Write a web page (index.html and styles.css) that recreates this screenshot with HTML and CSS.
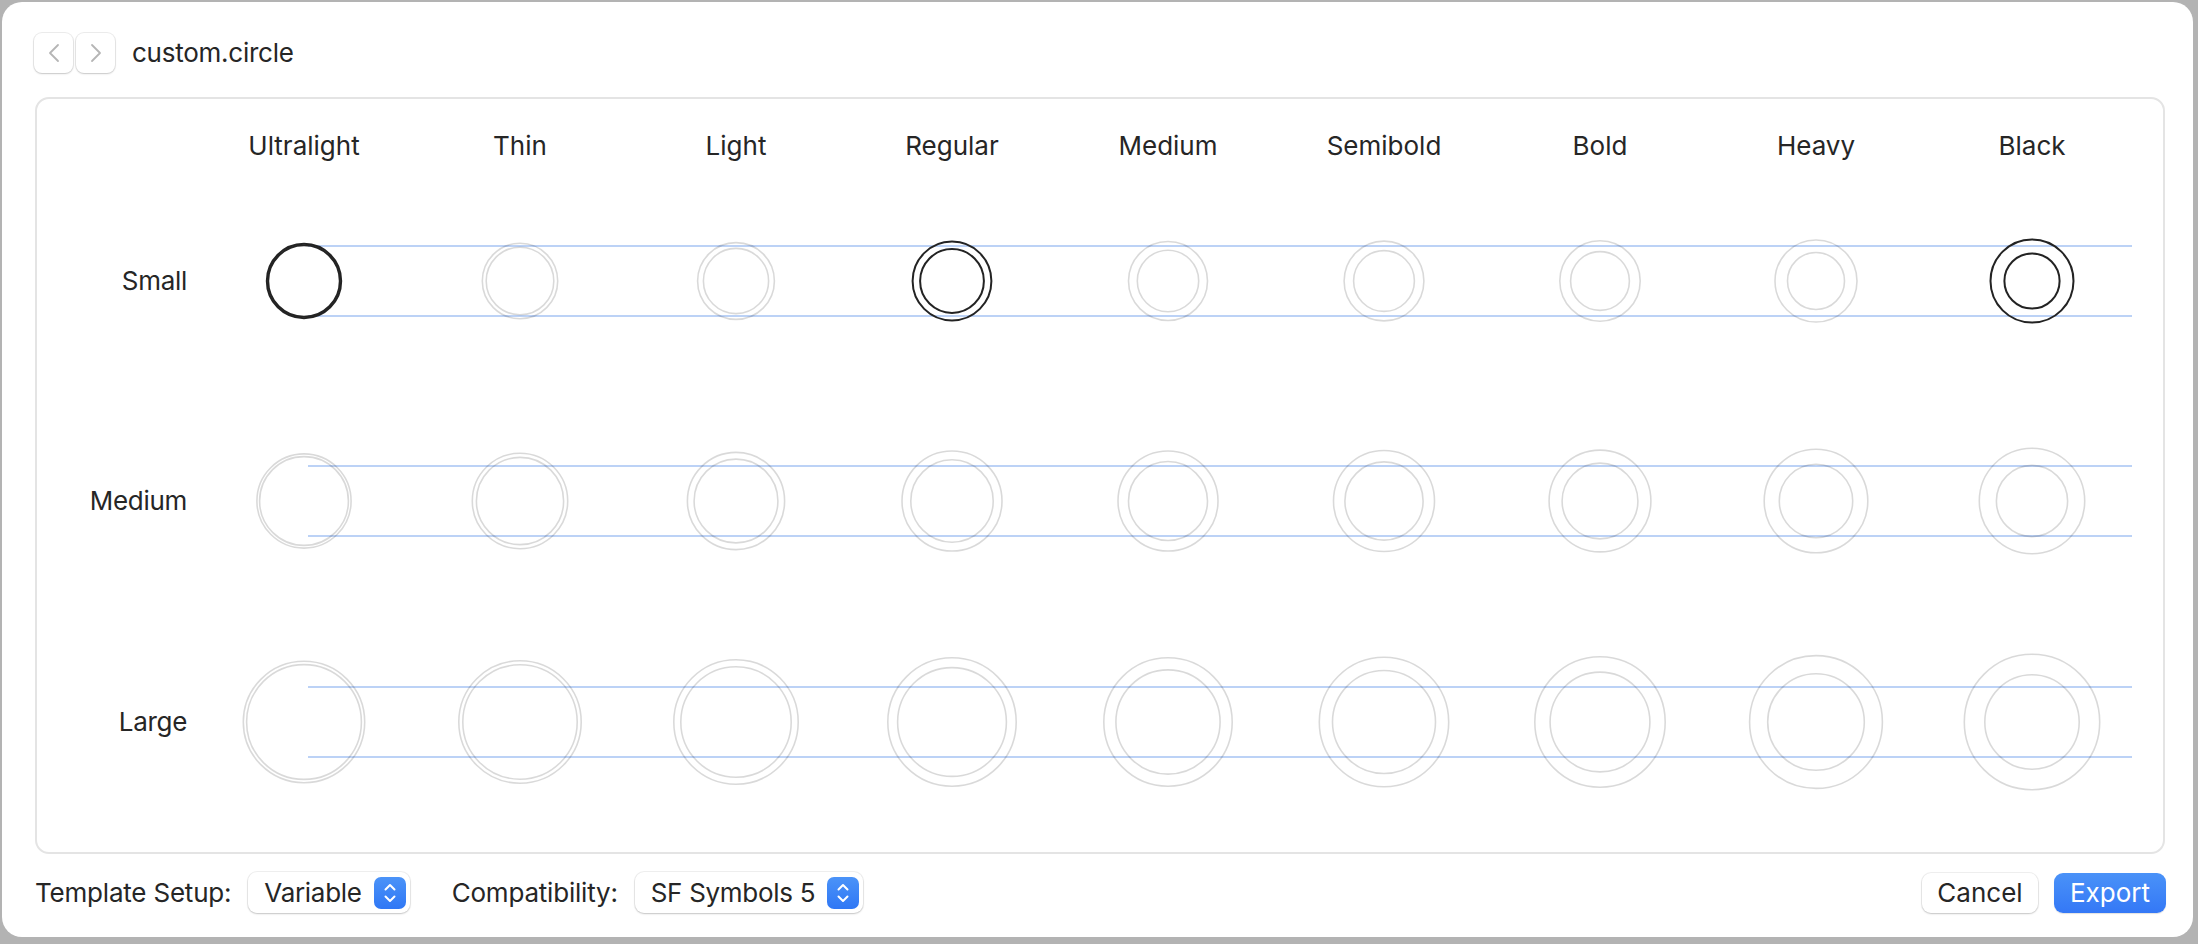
FILE: index.html
```html
<!DOCTYPE html>
<html>
<head>
<meta charset="utf-8">
<title>custom.circle</title>
<link rel="stylesheet" href="styles.css">
</head>
<body>
<div class="window">
  <div class="titlebar">
    <div class="navgroup">
      <button class="nav"><svg width="14" height="20" viewBox="0 0 14 20"><path d="M11 2 L3 10 L11 18" /></svg></button>
      <button class="nav"><svg width="14" height="20" viewBox="0 0 14 20"><path d="M3 2 L11 10 L3 18" /></svg></button>
    </div>
    <span class="title">custom.circle</span>
  </div>

  <div class="panel">
    <div class="row head">
      <div class="label"></div>
      <div class="track">
        <div class="cell">Ultralight</div>
        <div class="cell">Thin</div>
        <div class="cell">Light</div>
        <div class="cell">Regular</div>
        <div class="cell">Medium</div>
        <div class="cell">Semibold</div>
        <div class="cell">Bold</div>
        <div class="cell">Heavy</div>
        <div class="cell">Black</div>
      </div>
    </div>

    <div class="row scale s-small">
      <div class="label">Small</div>
      <div class="track lines">
        <div class="cell"><svg class="glyph on" viewBox="0 0 150 150"><circle cx="75" cy="75" r="37.2"/><circle cx="75" cy="75" r="35.8"/></svg></div>
        <div class="cell"><svg class="glyph" viewBox="0 0 150 150"><circle cx="75" cy="75" r="37.7"/><circle cx="75" cy="75" r="33.8"/></svg></div>
        <div class="cell"><svg class="glyph" viewBox="0 0 150 150"><circle cx="75" cy="75" r="38.4"/><circle cx="75" cy="75" r="32.6"/></svg></div>
        <div class="cell"><svg class="glyph on" viewBox="0 0 150 150"><circle cx="75" cy="75" r="39.4"/><circle cx="75" cy="75" r="31.9"/></svg></div>
        <div class="cell"><svg class="glyph" viewBox="0 0 150 150"><circle cx="75" cy="75" r="39.5"/><circle cx="75" cy="75" r="30.7"/></svg></div>
        <div class="cell"><svg class="glyph" viewBox="0 0 150 150"><circle cx="75" cy="75" r="39.9"/><circle cx="75" cy="75" r="30.4"/></svg></div>
        <div class="cell"><svg class="glyph" viewBox="0 0 150 150"><circle cx="75" cy="75" r="40.2"/><circle cx="75" cy="75" r="29.4"/></svg></div>
        <div class="cell"><svg class="glyph" viewBox="0 0 150 150"><circle cx="75" cy="75" r="41.0"/><circle cx="75" cy="75" r="28.5"/></svg></div>
        <div class="cell"><svg class="glyph on" viewBox="0 0 150 150"><circle cx="75" cy="75" r="41.5"/><circle cx="75" cy="75" r="27.6"/></svg></div>
      </div>
    </div>

    <div class="row scale s-medium">
      <div class="label">Medium</div>
      <div class="track lines">
        <div class="cell"><svg class="glyph" viewBox="0 0 150 150"><circle cx="75" cy="75" r="47.1"/><circle cx="75" cy="75" r="44.4"/></svg></div>
        <div class="cell"><svg class="glyph" viewBox="0 0 150 150"><circle cx="75" cy="75" r="47.7"/><circle cx="75" cy="75" r="43.6"/></svg></div>
        <div class="cell"><svg class="glyph" viewBox="0 0 150 150"><circle cx="75" cy="75" r="48.6"/><circle cx="75" cy="75" r="41.9"/></svg></div>
        <div class="cell"><svg class="glyph" viewBox="0 0 150 150"><circle cx="75" cy="75" r="50.0"/><circle cx="75" cy="75" r="41.2"/></svg></div>
        <div class="cell"><svg class="glyph" viewBox="0 0 150 150"><circle cx="75" cy="75" r="50.0"/><circle cx="75" cy="75" r="39.5"/></svg></div>
        <div class="cell"><svg class="glyph" viewBox="0 0 150 150"><circle cx="75" cy="75" r="50.5"/><circle cx="75" cy="75" r="39.1"/></svg></div>
        <div class="cell"><svg class="glyph" viewBox="0 0 150 150"><circle cx="75" cy="75" r="50.9"/><circle cx="75" cy="75" r="37.9"/></svg></div>
        <div class="cell"><svg class="glyph" viewBox="0 0 150 150"><circle cx="75" cy="75" r="51.8"/><circle cx="75" cy="75" r="36.7"/></svg></div>
        <div class="cell"><svg class="glyph" viewBox="0 0 150 150"><circle cx="75" cy="75" r="52.7"/><circle cx="75" cy="75" r="35.6"/></svg></div>
      </div>
    </div>

    <div class="row scale s-large">
      <div class="label">Large</div>
      <div class="track lines">
        <div class="cell"><svg class="glyph" viewBox="0 0 150 150"><circle cx="75" cy="75" r="60.7"/><circle cx="75" cy="75" r="57.4"/></svg></div>
        <div class="cell"><svg class="glyph" viewBox="0 0 150 150"><circle cx="75" cy="75" r="61.2"/><circle cx="75" cy="75" r="57.2"/></svg></div>
        <div class="cell"><svg class="glyph" viewBox="0 0 150 150"><circle cx="75" cy="75" r="62.2"/><circle cx="75" cy="75" r="55.2"/></svg></div>
        <div class="cell"><svg class="glyph" viewBox="0 0 150 150"><circle cx="75" cy="75" r="64.2"/><circle cx="75" cy="75" r="54.4"/></svg></div>
        <div class="cell"><svg class="glyph" viewBox="0 0 150 150"><circle cx="75" cy="75" r="64.2"/><circle cx="75" cy="75" r="52.1"/></svg></div>
        <div class="cell"><svg class="glyph" viewBox="0 0 150 150"><circle cx="75" cy="75" r="64.7"/><circle cx="75" cy="75" r="51.5"/></svg></div>
        <div class="cell"><svg class="glyph" viewBox="0 0 150 150"><circle cx="75" cy="75" r="65.2"/><circle cx="75" cy="75" r="49.9"/></svg></div>
        <div class="cell"><svg class="glyph" viewBox="0 0 150 150"><circle cx="75" cy="75" r="66.4"/><circle cx="75" cy="75" r="48.3"/></svg></div>
        <div class="cell"><svg class="glyph" viewBox="0 0 150 150"><circle cx="75" cy="75" r="67.7"/><circle cx="75" cy="75" r="47.2"/></svg></div>
      </div>
    </div>
  </div>

  <div class="footer">
    <div class="options">
      <span class="flabel">Template Setup:</span>
      <div class="popup">
        <span class="ptext">Variable</span>
        <span class="stepper"><svg width="32" height="32" viewBox="0 0 32 32"><path d="M11.5 12.5 L16 8 L20.5 12.5 M11.5 19.5 L16 24 L20.5 19.5"/></svg></span>
      </div>
      <span class="flabel second">Compatibility:</span>
      <div class="popup">
        <span class="ptext">SF Symbols 5</span>
        <span class="stepper"><svg width="32" height="32" viewBox="0 0 32 32"><path d="M11.5 12.5 L16 8 L20.5 12.5 M11.5 19.5 L16 24 L20.5 19.5"/></svg></span>
      </div>
    </div>
    <div class="actions">
      <button class="btn">Cancel</button>
      <button class="btn primary">Export</button>
    </div>
  </div>
</div>
</body>
</html>
```

FILE: styles.css
```css
html, body {
  margin: 0;
  padding: 0;
}

body {
  width: 2198px;
  height: 944px;
  background: #b3b3b3;
  padding: 2px 0 0 2px;
  box-sizing: border-box;
  font-family: Inter, "Liberation Sans", sans-serif;
  color: #262626;
  overflow: hidden;
}

.window {
  width: 2191px;
  height: 935px;
  background: #ffffff;
  border-radius: 20px;
  box-sizing: border-box;
  padding: 31px 28px 0 33px;
  display: flex;
  flex-direction: column;
}

/* title bar */
.titlebar {
  display: flex;
  align-items: center;
  height: 40px;
}

.navgroup {
  display: flex;
  gap: 3px;
  margin-left: -1px;
}

.nav {
  width: 39px;
  height: 40px;
  padding: 0;
  border: none;
  border-radius: 8px;
  background: #ffffff;
  box-shadow: 0 0 0 1px rgba(0, 0, 0, 0.07), 0 1px 2px rgba(0, 0, 0, 0.16);
  display: flex;
  align-items: center;
  justify-content: center;
}

.nav path {
  fill: none;
  stroke: #b5b5b5;
  stroke-width: 1.8;
  stroke-linecap: round;
  stroke-linejoin: round;
}

.title {
  margin-left: 17px;
  font-size: 26px;
  line-height: 32px;
  letter-spacing: -0.25px;
  color: #262626;
}

/* panel */
.panel {
  margin-top: 24px;
  height: 757px;
  box-sizing: border-box;
  border: 2px solid #e4e4e4;
  border-radius: 14px;
  display: flex;
  flex-direction: column;
}

.row {
  display: flex;
}

.row .label {
  width: 159px;
  flex: none;
  box-sizing: border-box;
  padding-right: 9px;
  text-align: right;
  font-size: 26px;
  line-height: 32px;
  letter-spacing: -0.3px;
  align-self: center;
}

.track {
  display: flex;
  width: 1944px;
}

.cell {
  width: 216px;
  flex: none;
  display: flex;
  align-items: center;
  justify-content: center;
}

.head {
  height: 72px;
}

.head .cell {
  font-size: 26px;
  line-height: 32px;
  padding-top: 31px;
  align-items: flex-start;
}

.s-small, .s-medium {
  height: 220px;
}

.s-large {
  height: 222px;
}

.lines {
  background-image:
    linear-gradient(#bcd2f6, #bcd2f6),
    linear-gradient(#bcd2f6, #bcd2f6);
  background-repeat: no-repeat;
  background-size: 1824px 2px, 1824px 2px;
  background-position: 112px calc(50% - 35px), 112px calc(50% + 35px);
}

.glyph {
  width: 150px;
  height: 150px;
  display: block;
}

.glyph circle {
  fill: none;
  stroke: rgba(0, 0, 0, 0.15);
  stroke-width: 1.6;
}

.glyph.on circle {
  stroke: #232323;
  stroke-width: 2;
}

/* footer */
.footer {
  margin-top: 18px;
  display: flex;
  justify-content: space-between;
  align-items: center;
  height: 41px;
}

.options {
  display: flex;
  align-items: center;
}

.flabel {
  font-size: 26px;
  line-height: 32px;
  letter-spacing: -0.2px;
  margin-right: 17px;
}

.flabel.second {
  margin-left: 42px;
}

.popup {
  height: 41px;
  box-sizing: border-box;
  display: flex;
  align-items: center;
  gap: 12px;
  padding: 0 4px 0 16px;
  background: #ffffff;
  border-radius: 9px;
  box-shadow: 0 0 0 1px rgba(0, 0, 0, 0.06), 0 1px 2px rgba(0, 0, 0, 0.18);
}

.ptext {
  font-size: 26px;
  line-height: 32px;
  letter-spacing: -0.3px;
}

.stepper {
  width: 32px;
  height: 32px;
  border-radius: 7px;
  background: linear-gradient(#4b93f8, #2f77f5);
  display: flex;
}

.stepper path {
  fill: none;
  stroke: #ffffff;
  stroke-width: 2;
  stroke-linecap: round;
  stroke-linejoin: round;
}

.actions {
  display: flex;
  gap: 16px;
  margin-right: -1px;
}

.btn {
  height: 40px;
  border: none;
  border-radius: 9px;
  font-family: Inter, "Liberation Sans", sans-serif;
  font-size: 26px;
  line-height: 32px;
  color: #262626;
  background: #ffffff;
  box-shadow: 0 0 0 1px rgba(0, 0, 0, 0.06), 0 1px 2px rgba(0, 0, 0, 0.18);
  padding: 0;
  width: 116px;
}

.btn.primary {
  width: 112px;
  color: #ffffff;
  background: linear-gradient(#4a92f8, #3478f6);
  box-shadow: 0 1px 1px rgba(0, 0, 0, 0.12);
}
```
